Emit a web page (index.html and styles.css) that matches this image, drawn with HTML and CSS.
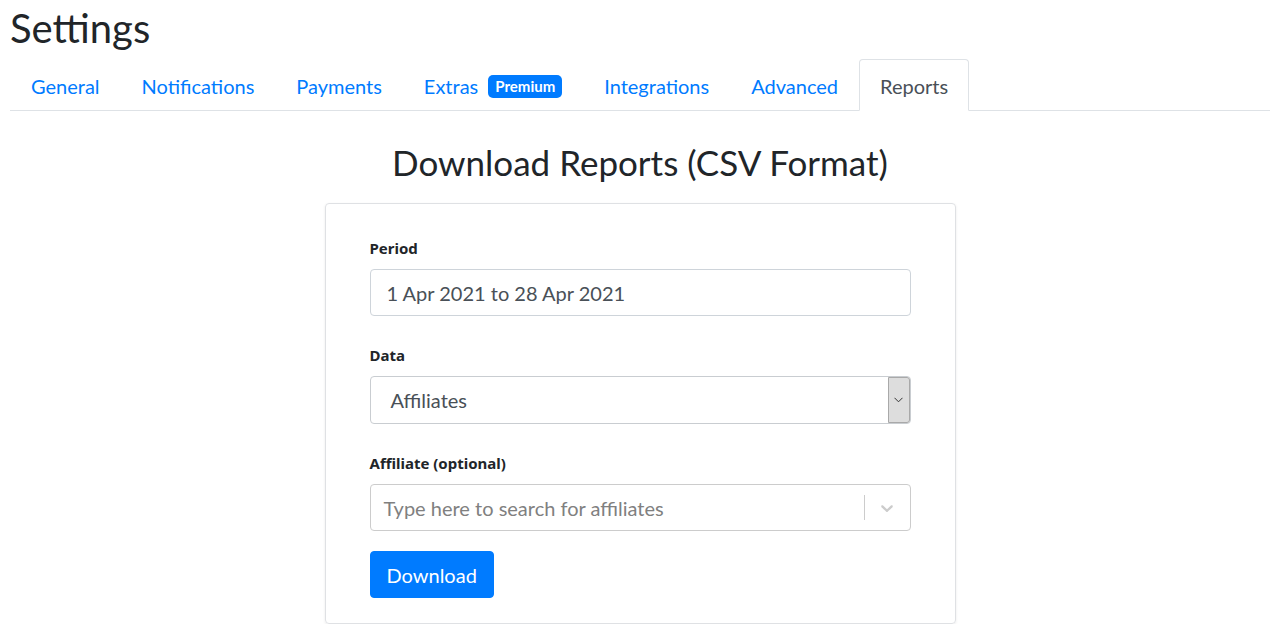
FILE: index.html
```html
<!DOCTYPE html>
<html lang="en">
<head>
<meta charset="utf-8">
<title>Settings</title>
<link rel="stylesheet" href="styles.css">
</head>
<body>
<h1 class="page-title">Settings</h1>
<ul class="tabs">
  <li><a class="tab" href="#">General</a></li>
  <li><a class="tab" href="#">Notifications</a></li>
  <li><a class="tab" href="#">Payments</a></li>
  <li><a class="tab" href="#">Extras <span class="badge">Premium</span></a></li>
  <li><a class="tab" href="#">Integrations</a></li>
  <li><a class="tab" href="#">Advanced</a></li>
  <li><a class="tab active" href="#">Reports</a></li>
</ul>
<h2 class="section-title">Download Reports (CSV Format)</h2>
<div class="card">
  <div class="field">
    <label class="label">Period</label>
    <div class="input">1 Apr 2021 to 28 Apr 2021</div>
  </div>
  <div class="field">
    <label class="label">Data</label>
    <div class="native-select">
      <span class="native-value">Affiliates</span>
      <span class="native-arrow"><svg width="9" height="6" viewBox="0 0 9 6"><path d="M0.5 0.8 L4.5 4.8 L8.5 0.8" fill="none" stroke="#333" stroke-width="1"/></svg></span>
    </div>
  </div>
  <div class="field">
    <label class="label">Affiliate (optional)</label>
    <div class="rselect">
      <span class="rs-placeholder">Type here to search for affiliates</span>
      <span class="rs-sep"></span>
      <span class="rs-ind"><svg width="20" height="20" viewBox="0 0 20 20"><path fill="#cccccc" d="M4.516 7.548c0.436-0.446 1.043-0.481 1.576 0l3.908 3.747 3.908-3.747c0.533-0.481 1.141-0.446 1.574 0 0.436 0.445 0.408 1.197 0 1.615-0.406 0.418-4.695 4.502-4.695 4.502-0.217 0.223-0.502 0.335-0.787 0.335s-0.57-0.112-0.789-0.335c0 0-4.287-4.084-4.695-4.502s-0.436-1.17 0-1.615z"/></svg></span>
    </div>
  </div>
  <button class="btn" type="button">Download</button>
</div>
</body>
</html>
```
FILE: styles.css
```css
* { box-sizing: border-box; }
body {
  margin: 0;
  padding: 0 10px;
  font-family: Lato, "Noto Sans", sans-serif;
  color: #212529;
  background: #fff;
}
.page-title {
  font-size: 40px;
  font-weight: 400;
  line-height: 48px;
  margin: 4px 0 7px 0;
}
.tabs {
  list-style: none;
  margin: 0;
  padding: 0;
  display: flex;
  border-bottom: 1px solid #dee2e6;
}
.tabs li { margin-bottom: -1px; }
.tab {
  display: flex;
  align-items: center;
  padding: 11px 20px 9px 20px;
  font-size: 20px;
  line-height: 30px;
  color: #007bff;
  text-decoration: none;
  border: 1px solid transparent;
  border-radius: 4px 4px 0 0;
}
.tab.active {
  color: #495057;
  background: #fff;
  border-color: #dee2e6 #dee2e6 #fff;
}
.badge {
  display: inline-block;
  margin-left: 10px;
  background: #007bff;
  color: #fff;
  font-size: 15px;
  font-weight: 700;
  line-height: 23px;
  padding: 0 7px;
  border-radius: 5px;
}
.section-title {
  text-align: center;
  font-size: 35px;
  font-weight: 400;
  line-height: 42px;
  margin: 30px 0 20px 0;
}
.card {
  width: 631px;
  margin: 0 auto;
  border: 1px solid #dfe1e4;
  border-radius: 4px;
  box-shadow: 0 1px 3px rgba(0,0,0,0.08);
  padding: 33px 44px 25px 44px;
}
.field { margin-bottom: 28px; }
.field:last-of-type { margin-bottom: 20px; }
.label {
  display: block;
  font-family: "Noto Sans", Lato, sans-serif;
  font-size: 15px;
  font-weight: 700;
  line-height: 22px;
  margin-bottom: 10px;
}
.input {
  height: 47px;
  border: 1px solid #ced4da;
  border-radius: 4px;
  padding: 0 16px;
  display: flex;
  align-items: center;
  font-size: 20px;
  color: #495057;
}
.native-select {
  height: 48px;
  border: 1px solid #c9cdd1;
  border-radius: 4px;
  display: flex;
  align-items: stretch;
  font-size: 20px;
  color: #495057;
}
.native-value {
  flex: 1;
  display: flex;
  align-items: center;
  padding-left: 20px;
}
.native-arrow {
  width: 22px;
  background: #dddddd;
  border: 1px solid #a9a9a9;
  border-radius: 0 3px 3px 0;
  display: flex;
  align-items: center;
  justify-content: center;
}
.rselect {
  height: 47px;
  border: 1px solid #cccccc;
  border-radius: 4px;
  display: flex;
  align-items: center;
  font-size: 20px;
}
.rs-placeholder {
  flex: 1;
  padding-left: 13px;
  color: #808080;
}
.rs-sep {
  width: 1px;
  align-self: stretch;
  margin: 10px 0;
  background: #cccccc;
}
.rs-ind {
  width: 45px;
  display: flex;
  align-items: center;
  justify-content: center;
}
.btn {
  display: block;
  height: 47px;
  padding: 0 16px;
  background: #007bff;
  color: #fff;
  border: 1px solid #007bff;
  border-radius: 4px;
  font-family: inherit;
  font-size: 20px;
}
```
